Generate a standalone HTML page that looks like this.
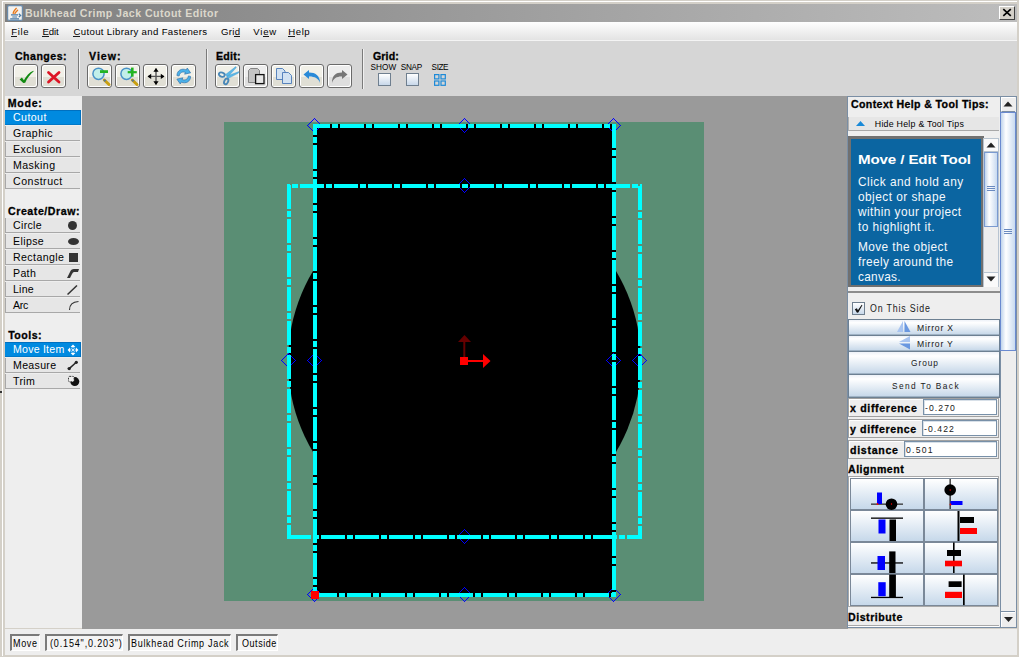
<!DOCTYPE html>
<html><head><meta charset="utf-8"><style>
html,body{margin:0;padding:0;width:1019px;height:657px;overflow:hidden;background:#d4d0c8;}
.b{position:absolute;}
.t{position:absolute;white-space:nowrap;line-height:1;font-family:"Liberation Sans", sans-serif;}
.tbtn{width:25px;height:24px;box-sizing:border-box;border:1px solid #6a6a6a;border-radius:3px;background:linear-gradient(#f1f0e8 0%,#f1f0e8 54%,#e0dfd5 54%,#e0dfd5 100%);box-shadow:inset 1px 1px 0 #fff,inset -1px -1px 0 #fff;}
.tbtn.g{background:linear-gradient(#ededed 0%,#ededed 54%,#dedede 54%,#dedede 100%);}
</style></head><body>
<div class="b" style="left:0px;top:0px;width:1019px;height:657px;background:#d4d0c8;"></div>
<div class="b" style="left:2px;top:1px;width:1015px;height:1px;background:#ffffff;"></div>
<div class="b" style="left:2px;top:1px;width:1px;height:655px;background:#ffffff;"></div>
<div class="b" style="left:5px;top:4px;width:1012px;height:18px;background:linear-gradient(to right,#7f7f7f,#bdbdbd);"></div>
<svg class="b" style="left:7px;top:5px" width="16" height="16" viewBox="0 0 16 16"><rect x="0.6" y="0.6" width="14.8" height="14.8" rx="1.5" fill="#f2f2f0" stroke="#6a8cac" stroke-width="1.2"/><path d="M6.3 9 C5.6 7 7.6 5.2 9.6 3 M7.8 9 C7.8 7.3 10.2 6.3 10.8 4.8" stroke="#e8781a" stroke-width="1.3" fill="none"/><path d="M4 9.9 H11 M5.3 12 H10 M3.2 13.9 H12" stroke="#4a7aa5" stroke-width="1.1"/><path d="M11.8 8.8 L13.6 10.4 L11.8 12.1" stroke="#4a7aa5" stroke-width="1.3" fill="none"/></svg>
<div class="t" style="left:25px;top:7.53px;font-size:10.6px;font-weight:bold;color:#dcd8cc;letter-spacing:0.462px;">Bulkhead Crimp Jack Cutout Editor</div>
<div class="b" style="left:999px;top:6px;width:16px;height:14px;background:#d4d0c8;border-top:1px solid #fff;border-left:1px solid #fff;border-right:1px solid #404040;border-bottom:1px solid #404040;box-sizing:border-box;"></div>
<svg class="b" style="left:1002px;top:8px" width="10" height="9" viewBox="0 0 10 9"><path d="M1.3 1.2 L8.8 7.8 M8.8 1.2 L1.3 7.8" stroke="#000" stroke-width="1.7"/></svg>
<div class="b" style="left:5px;top:22px;width:1012px;height:19px;background:linear-gradient(#fefefe,#e2e2e2);"></div>
<div class="b" style="left:5px;top:40px;width:1012px;height:1px;background:#f4f4f4;"></div>
<div class="t" style="left:11.2px;top:27.17px;font-size:9.6px;color:#000;letter-spacing:0.659px;">File</div>
<div class="b" style="left:11px;top:36px;width:6px;height:1px;background:#1a1a1a;"></div>
<div class="t" style="left:42.4px;top:27.17px;font-size:9.6px;color:#000;letter-spacing:-0.089px;">Edit</div>
<div class="b" style="left:42px;top:36px;width:7px;height:1px;background:#1a1a1a;"></div>
<div class="t" style="left:73.5px;top:27.17px;font-size:9.6px;color:#000;letter-spacing:0.346px;">Cutout Library and Fasteners</div>
<div class="b" style="left:73px;top:36px;width:7px;height:1px;background:#1a1a1a;"></div>
<div class="t" style="left:221px;top:27.17px;font-size:9.6px;color:#000;letter-spacing:0.337px;">Grid</div>
<div class="b" style="left:234px;top:36px;width:6px;height:1px;background:#1a1a1a;"></div>
<div class="t" style="left:253.2px;top:27.17px;font-size:9.6px;color:#000;letter-spacing:0.802px;">View</div>
<div class="b" style="left:263px;top:36px;width:6px;height:1px;background:#1a1a1a;"></div>
<div class="t" style="left:288.3px;top:27.17px;font-size:9.6px;color:#000;letter-spacing:0.535px;">Help</div>
<div class="b" style="left:288px;top:36px;width:7px;height:1px;background:#1a1a1a;"></div>
<div class="b" style="left:5px;top:41px;width:1012px;height:55px;background:#d6d6d6;"></div>
<div class="t" style="left:15px;top:50.73px;font-size:10.6px;font-weight:bold;-webkit-text-stroke:0.3px #000;color:#000;letter-spacing:0.466px;">Changes:</div>
<div class="t" style="left:89px;top:50.73px;font-size:10.6px;font-weight:bold;-webkit-text-stroke:0.3px #000;color:#000;letter-spacing:1.013px;">View:</div>
<div class="t" style="left:216px;top:50.73px;font-size:10.6px;font-weight:bold;-webkit-text-stroke:0.3px #000;color:#000;letter-spacing:0.248px;">Edit:</div>
<div class="t" style="left:373px;top:50.73px;font-size:10.6px;font-weight:bold;-webkit-text-stroke:0.3px #000;color:#000;letter-spacing:0.131px;">Grid:</div>
<div class="b" style="left:78px;top:49px;width:1px;height:40px;background:#7a7a7a;"></div>
<div class="b" style="left:79px;top:49px;width:1px;height:40px;background:#f0f0f0;"></div>
<div class="b" style="left:206px;top:49px;width:1px;height:40px;background:#7a7a7a;"></div>
<div class="b" style="left:207px;top:49px;width:1px;height:40px;background:#f0f0f0;"></div>
<div class="b" style="left:362px;top:49px;width:1px;height:40px;background:#7a7a7a;"></div>
<div class="b" style="left:363px;top:49px;width:1px;height:40px;background:#f0f0f0;"></div>
<div class="b tbtn" style="left:13px;top:64px;"></div>
<div class="b tbtn" style="left:41px;top:64px;"></div>
<div class="b tbtn" style="left:87px;top:64px;"></div>
<div class="b tbtn" style="left:115px;top:64px;"></div>
<div class="b tbtn" style="left:143px;top:64px;"></div>
<div class="b tbtn" style="left:171px;top:64px;"></div>
<div class="b tbtn" style="left:215px;top:64px;"></div>
<div class="b tbtn" style="left:271px;top:64px;"></div>
<div class="b tbtn" style="left:299px;top:64px;"></div>
<div class="b tbtn g" style="left:243px;top:64px;"></div>
<div class="b tbtn g" style="left:327px;top:64px;"></div>
<svg class="b" style="left:13px;top:64px" width="25" height="24" viewBox="0 0 25 24"><path d="M6.6 15.4 L8.9 13.6 L10.9 16.3 C13.2 11.8 16.2 8.4 20.4 6.7 L20.6 7.6 C17 10.4 14.3 14.2 12.2 18.7 L10.3 18.9 Z" fill="#128a12"/></svg>
<svg class="b" style="left:41px;top:64px" width="25" height="24" viewBox="0 0 25 24"><path d="M7.5 8.5 L18 18 M18 8.5 L7.5 18" stroke="#dd1525" stroke-width="2.8" stroke-linecap="round"/></svg>
<svg class="b" style="left:87px;top:64px" width="25" height="24" viewBox="0 0 25 24"><circle cx="11.5" cy="9.8" r="5.6" fill="#c2efe9" stroke="#4a92c8" stroke-width="1.5"/><path d="M17.3 16 L22 20.5" stroke="#c9a010" stroke-width="3" stroke-linecap="round"/><path d="M17 15.7 L18.6 17.2" stroke="#5a7a90" stroke-width="2"/><rect x="13" y="6.2" width="8" height="2.8" fill="#22b422"/></svg>
<svg class="b" style="left:115px;top:64px" width="25" height="24" viewBox="0 0 25 24"><circle cx="11.5" cy="9.8" r="5.6" fill="#c2efe9" stroke="#4a92c8" stroke-width="1.5"/><path d="M17.3 16 L22 20.5" stroke="#c9a010" stroke-width="3" stroke-linecap="round"/><path d="M17 15.7 L18.6 17.2" stroke="#5a7a90" stroke-width="2"/><rect x="12.7" y="7.1" width="9.1" height="2.2" fill="#22b422"/><rect x="16" y="3.6" width="2.6" height="9.1" fill="#22b422"/></svg>
<svg class="b" style="left:143px;top:64px" width="25" height="24" viewBox="0 0 25 24"><path d="M5 12.4 H21 M13 4.5 V20.5" stroke="#555" stroke-width="1.4"/><path d="M4.5 12.4 L8.2 9.8 V15 Z M21.5 12.4 L17.8 9.8 V15 Z M13 4 L10.4 7.8 H15.6 Z M13 21 L10.4 17.2 H15.6 Z" fill="#000"/></svg>
<svg class="b" style="left:171px;top:64px" width="25" height="24" viewBox="0 0 25 24"><g transform="rotate(12 12.8 12)"><path d="M6 13 C5 8 9 4.5 14 5.5 L14.5 3.5 L18.8 7.5 L13.2 10 L13.8 8.2 C10.5 7.5 8 9.5 8.2 13 Z" fill="#4ab2ea" stroke="#3a7ab0" stroke-width="0.7"/><path d="M19.5 11 C20.5 16 16.5 19.5 11.5 18.5 L11 20.5 L6.7 16.5 L12.3 14 L11.7 15.8 C15 16.5 17.5 14.5 17.3 11 Z" fill="#4ab2ea" stroke="#3a7ab0" stroke-width="0.7"/></g></svg>
<svg class="b" style="left:215px;top:64px" width="25" height="24" viewBox="0 0 25 24"><path d="M10.5 10.6 L20.8 2.6 L21.3 3.6 L12.6 13.2 Z" fill="#5ab8e8" stroke="#4a98c8" stroke-width="0.4"/><path d="M11.8 12 L24 7.6 L23.6 9 L13 14.6 Z" fill="#5ab8e8" stroke="#4a98c8" stroke-width="0.4"/><ellipse cx="6.8" cy="10.6" rx="3" ry="2.1" fill="none" stroke="#4a88b8" stroke-width="1.9" transform="rotate(15 6.8 10.6)"/><ellipse cx="11.2" cy="17.4" rx="1.9" ry="3" fill="none" stroke="#4a88b8" stroke-width="1.9" transform="rotate(25 11.2 17.4)"/></svg>
<svg class="b" style="left:243px;top:64px" width="25" height="24" viewBox="0 0 25 24"><path d="M5.5 18.5 V6.5 L7.5 4.5 H14.5 L16.5 6.5 V18.5 Z" fill="#c4c4c4" stroke="#7a7a7a" stroke-width="0.9"/><rect x="12.6" y="10.6" width="8.4" height="9" fill="#e6e6e6" stroke="#111" stroke-width="1.3"/></svg>
<svg class="b" style="left:271px;top:64px" width="25" height="24" viewBox="0 0 25 24"><path d="M5.5 4.5 H11.5 L14 7 V15.5 H5.5 Z" fill="#d2e2f2" stroke="#4a78b8" stroke-width="0.9"/><path d="M11.5 8.5 H17.5 L20.5 11.5 V19.5 H11.5 Z" fill="#d2e2f2" stroke="#4a78b8" stroke-width="0.9"/></svg>
<svg class="b" style="left:299px;top:64px" width="25" height="24" viewBox="0 0 25 24"><path d="M4.5 10.5 L10 6 V8.6 C16 8.5 21 11.5 21 19 C19.5 14.5 15.5 12.5 10 12.6 V15 Z" fill="#2a8ad8"/></svg>
<svg class="b" style="left:327px;top:64px" width="25" height="24" viewBox="0 0 25 24"><path d="M20.5 10.5 L15 6 V8.6 C9 8.5 5 11.5 5 19 C6.5 14.5 9.5 12.5 15 12.6 V15 Z" fill="#777"/></svg>
<div class="t" style="left:370.6px;top:64.06px;font-size:8.2px;color:#000;letter-spacing:0.053px;">SHOW</div>
<div class="t" style="left:400.7px;top:64.06px;font-size:8.2px;color:#000;letter-spacing:-0.245px;">SNAP</div>
<div class="t" style="left:431.6px;top:64.06px;font-size:8.2px;color:#000;letter-spacing:-0.412px;">SIZE</div>
<div class="b" style="left:378px;top:73px;width:13px;height:13px;border:1px solid #6f7f8f;box-sizing:border-box;background:linear-gradient(#ffffff,#c8d8ea);"></div>
<div class="b" style="left:406px;top:73px;width:13px;height:13px;border:1px solid #6f7f8f;box-sizing:border-box;background:linear-gradient(#ffffff,#c8d8ea);"></div>
<svg class="b" style="left:434px;top:74px" width="12" height="12" viewBox="0 0 12 12"><g fill="none" stroke="#1d8ad8" stroke-width="1.2"><rect x="0.6" y="0.6" width="4.3" height="4.3"/><rect x="7" y="0.6" width="4.3" height="4.3"/><rect x="0.6" y="7" width="4.3" height="4.3"/><rect x="7" y="7" width="4.3" height="4.3"/></g></svg>
<div class="b" style="left:5px;top:96px;width:77px;height:532px;background:#eeeeee;"></div>
<div class="t" style="left:7.8px;top:97.73px;font-size:10.6px;font-weight:bold;-webkit-text-stroke:0.3px #000;color:#000;letter-spacing:0.710px;">Mode:</div>
<div class="b" style="left:5px;top:110px;width:76px;height:15px;background:#008ae0;box-shadow:inset 0 1px 0 #0070c0,inset -1px 0 0 #0070c0,inset 0 -1px 0 #0078c8;"></div>
<div class="t" style="left:13px;top:111.83px;font-size:10.6px;color:#ffffff;letter-spacing:0.426px;">Cutout</div>
<div class="b" style="left:5px;top:126px;width:75px;height:15px;background:#e6e6e6;border-left:1px solid #a8a8a8;border-bottom:1px solid #a8a8a8;box-sizing:border-box;"></div>
<div class="t" style="left:13px;top:127.83px;font-size:10.6px;color:#000;letter-spacing:0.401px;">Graphic</div>
<div class="b" style="left:5px;top:142px;width:75px;height:15px;background:#e6e6e6;border-left:1px solid #a8a8a8;border-bottom:1px solid #a8a8a8;box-sizing:border-box;"></div>
<div class="t" style="left:13px;top:143.83px;font-size:10.6px;color:#000;letter-spacing:0.394px;">Exclusion</div>
<div class="b" style="left:5px;top:158px;width:75px;height:15px;background:#e6e6e6;border-left:1px solid #a8a8a8;border-bottom:1px solid #a8a8a8;box-sizing:border-box;"></div>
<div class="t" style="left:13px;top:159.83px;font-size:10.6px;color:#000;letter-spacing:0.441px;">Masking</div>
<div class="b" style="left:5px;top:174px;width:75px;height:15px;background:#e6e6e6;border-left:1px solid #a8a8a8;border-bottom:1px solid #a8a8a8;box-sizing:border-box;"></div>
<div class="t" style="left:13px;top:175.83px;font-size:10.6px;color:#000;letter-spacing:0.489px;">Construct</div>
<div class="t" style="left:8px;top:206.03px;font-size:10.6px;font-weight:bold;-webkit-text-stroke:0.3px #000;color:#000;letter-spacing:0.561px;">Create/Draw:</div>
<div class="b" style="left:5px;top:218px;width:75px;height:15px;background:#e6e6e6;border-left:1px solid #a8a8a8;border-bottom:1px solid #a8a8a8;box-sizing:border-box;"></div>
<div class="t" style="left:13px;top:219.83px;font-size:10.6px;color:#000;letter-spacing:0.324px;">Circle</div>
<div class="b" style="left:68px;top:221px;width:9px;height:9px;border-radius:50%;background:#333;"></div>
<div class="b" style="left:5px;top:234px;width:75px;height:15px;background:#e6e6e6;border-left:1px solid #a8a8a8;border-bottom:1px solid #a8a8a8;box-sizing:border-box;"></div>
<div class="t" style="left:13px;top:235.83px;font-size:10.6px;color:#000;letter-spacing:0.368px;">Elipse</div>
<div class="b" style="left:68px;top:238px;width:11px;height:7px;border-radius:50%;background:#333;"></div>
<div class="b" style="left:5px;top:250px;width:75px;height:15px;background:#e6e6e6;border-left:1px solid #a8a8a8;border-bottom:1px solid #a8a8a8;box-sizing:border-box;"></div>
<div class="t" style="left:13px;top:251.83px;font-size:10.6px;color:#000;letter-spacing:0.411px;">Rectangle</div>
<div class="b" style="left:69px;top:253px;width:9px;height:9px;background:#333;"></div>
<div class="b" style="left:5px;top:266px;width:75px;height:15px;background:#e6e6e6;border-left:1px solid #a8a8a8;border-bottom:1px solid #a8a8a8;box-sizing:border-box;"></div>
<div class="t" style="left:13px;top:267.83px;font-size:10.6px;color:#000;letter-spacing:0.333px;">Path</div>
<svg class="b" style="left:67px;top:269px" width="12" height="10" viewBox="0 0 12 10"><path d="M0 9 L3 3 Q4 0 7 0 L12 0 L11 3 L7 3 Q6 3 5 5 L3 9 Z" fill="#333"/></svg>
<div class="b" style="left:5px;top:282px;width:75px;height:15px;background:#e6e6e6;border-left:1px solid #a8a8a8;border-bottom:1px solid #a8a8a8;box-sizing:border-box;"></div>
<div class="t" style="left:13px;top:283.83px;font-size:10.6px;color:#000;letter-spacing:0.221px;">Line</div>
<svg class="b" style="left:67px;top:285px" width="12" height="10" viewBox="0 0 12 10"><path d="M0.5 9.5 L10 0.5" stroke="#333" stroke-width="1.5"/></svg>
<div class="b" style="left:5px;top:298px;width:75px;height:15px;background:#e6e6e6;border-left:1px solid #a8a8a8;border-bottom:1px solid #a8a8a8;box-sizing:border-box;"></div>
<div class="t" style="left:13px;top:299.83px;font-size:10.6px;color:#000;letter-spacing:-0.297px;">Arc</div>
<svg class="b" style="left:68px;top:300px" width="12" height="11" viewBox="0 0 12 11"><path d="M1.5 10 Q1.5 2 10.5 1.5" stroke="#333" stroke-width="1.1" fill="none"/></svg>
<div class="t" style="left:8.2px;top:329.83px;font-size:10.6px;font-weight:bold;-webkit-text-stroke:0.3px #000;color:#000;letter-spacing:0.488px;">Tools:</div>
<div class="b" style="left:5px;top:342px;width:76px;height:15px;background:#008ae0;box-shadow:inset 0 1px 0 #0070c0,inset -1px 0 0 #0070c0,inset 0 -1px 0 #0078c8;"></div>
<div class="t" style="left:13px;top:343.83px;font-size:10.6px;color:#ffffff;letter-spacing:0.222px;">Move Item</div>
<svg class="b" style="left:67px;top:344px" width="12" height="12" viewBox="0 0 12 12"><g fill="#fff"><path d="M6 0.6 L8.4 3 L3.6 3Z M6 11.4 L8.4 9 L3.6 9Z M0.6 6 L3 3.6 L3 8.4Z M11.4 6 L9 3.6 L9 8.4Z"/><circle cx="6" cy="6" r="1.1"/></g><circle cx="6" cy="6" r="2.4" fill="none" stroke="#bfe0f8" stroke-width="0.8"/></svg>
<div class="b" style="left:5px;top:358px;width:75px;height:15px;background:#e6e6e6;border-left:1px solid #a8a8a8;border-bottom:1px solid #a8a8a8;box-sizing:border-box;"></div>
<div class="t" style="left:13px;top:359.83px;font-size:10.6px;color:#000;letter-spacing:0.313px;">Measure</div>
<svg class="b" style="left:67px;top:360px" width="12" height="11" viewBox="0 0 12 11"><path d="M2.2 8.6 L9.3 2.3" stroke="#222" stroke-width="1.5"/><circle cx="2.2" cy="8.6" r="1.7" fill="#222"/><circle cx="9.3" cy="2.3" r="1.6" fill="#222"/></svg>
<div class="b" style="left:5px;top:374px;width:75px;height:15px;background:#e6e6e6;border-left:1px solid #a8a8a8;border-bottom:1px solid #a8a8a8;box-sizing:border-box;"></div>
<div class="t" style="left:13px;top:375.83px;font-size:10.6px;color:#000;letter-spacing:0.347px;">Trim</div>
<svg class="b" style="left:66px;top:374px" width="14" height="14" viewBox="0 0 14 14"><circle cx="8.8" cy="7.6" r="4.5" fill="#111"/><rect x="2.5" y="2.4" width="5.6" height="5.4" rx="1.2" fill="#eee" stroke="#222" stroke-width="0.9" stroke-dasharray="1.6 1"/></svg>
<div class="b" style="left:82px;top:96px;width:766px;height:533px;background:#9a9a9a;"></div>
<div class="b" style="left:224px;top:122px;width:480px;height:479px;background:#5a8e74;"></div>
<svg class="b" style="left:0px;top:0px" width="1019" height="657" viewBox="0 0 1019 657"><circle cx="464.5" cy="361.5" r="176.5" fill="#000"/>
<rect x="313" y="124" width="303" height="473" fill="#000"/>
<path shape-rendering="crispEdges" fill="#0000ff" d="M307 125h1v1h-1zM308 124h1v1h-1zM308 126h1v1h-1zM309 123h1v1h-1zM309 127h1v1h-1zM310 122h1v1h-1zM310 128h1v1h-1zM311 121h1v1h-1zM311 129h1v1h-1zM312 120h1v1h-1zM312 130h1v1h-1zM313 119h1v1h-1zM313 131h1v1h-1zM314 118h1v1h-1zM314 132h1v1h-1zM315 119h1v1h-1zM315 131h1v1h-1zM316 120h1v1h-1zM316 130h1v1h-1zM317 121h1v1h-1zM317 129h1v1h-1zM318 122h1v1h-1zM318 128h1v1h-1zM319 123h1v1h-1zM319 127h1v1h-1zM320 124h1v1h-1zM320 126h1v1h-1zM321 125h1v1h-1zM457 125h1v1h-1zM458 124h1v1h-1zM458 126h1v1h-1zM459 123h1v1h-1zM459 127h1v1h-1zM460 122h1v1h-1zM460 128h1v1h-1zM461 121h1v1h-1zM461 129h1v1h-1zM462 120h1v1h-1zM462 130h1v1h-1zM463 119h1v1h-1zM463 131h1v1h-1zM464 118h1v1h-1zM464 132h1v1h-1zM465 119h1v1h-1zM465 131h1v1h-1zM466 120h1v1h-1zM466 130h1v1h-1zM467 121h1v1h-1zM467 129h1v1h-1zM468 122h1v1h-1zM468 128h1v1h-1zM469 123h1v1h-1zM469 127h1v1h-1zM470 124h1v1h-1zM470 126h1v1h-1zM471 125h1v1h-1zM606 125h1v1h-1zM607 124h1v1h-1zM607 126h1v1h-1zM608 123h1v1h-1zM608 127h1v1h-1zM609 122h1v1h-1zM609 128h1v1h-1zM610 121h1v1h-1zM610 129h1v1h-1zM611 120h1v1h-1zM611 130h1v1h-1zM612 119h1v1h-1zM612 131h1v1h-1zM613 118h1v1h-1zM613 132h1v1h-1zM614 119h1v1h-1zM614 131h1v1h-1zM615 120h1v1h-1zM615 130h1v1h-1zM616 121h1v1h-1zM616 129h1v1h-1zM617 122h1v1h-1zM617 128h1v1h-1zM618 123h1v1h-1zM618 127h1v1h-1zM619 124h1v1h-1zM619 126h1v1h-1zM620 125h1v1h-1zM307 360h1v1h-1zM308 359h1v1h-1zM308 361h1v1h-1zM309 358h1v1h-1zM309 362h1v1h-1zM310 357h1v1h-1zM310 363h1v1h-1zM311 356h1v1h-1zM311 364h1v1h-1zM312 355h1v1h-1zM312 365h1v1h-1zM313 354h1v1h-1zM313 366h1v1h-1zM314 353h1v1h-1zM314 367h1v1h-1zM315 354h1v1h-1zM315 366h1v1h-1zM316 355h1v1h-1zM316 365h1v1h-1zM317 356h1v1h-1zM317 364h1v1h-1zM318 357h1v1h-1zM318 363h1v1h-1zM319 358h1v1h-1zM319 362h1v1h-1zM320 359h1v1h-1zM320 361h1v1h-1zM321 360h1v1h-1zM606 360h1v1h-1zM607 359h1v1h-1zM607 361h1v1h-1zM608 358h1v1h-1zM608 362h1v1h-1zM609 357h1v1h-1zM609 363h1v1h-1zM610 356h1v1h-1zM610 364h1v1h-1zM611 355h1v1h-1zM611 365h1v1h-1zM612 354h1v1h-1zM612 366h1v1h-1zM613 353h1v1h-1zM613 367h1v1h-1zM614 354h1v1h-1zM614 366h1v1h-1zM615 355h1v1h-1zM615 365h1v1h-1zM616 356h1v1h-1zM616 364h1v1h-1zM617 357h1v1h-1zM617 363h1v1h-1zM618 358h1v1h-1zM618 362h1v1h-1zM619 359h1v1h-1zM619 361h1v1h-1zM620 360h1v1h-1zM307 594h1v1h-1zM308 593h1v1h-1zM308 595h1v1h-1zM309 592h1v1h-1zM309 596h1v1h-1zM310 591h1v1h-1zM310 597h1v1h-1zM311 590h1v1h-1zM311 598h1v1h-1zM312 589h1v1h-1zM312 599h1v1h-1zM313 588h1v1h-1zM313 600h1v1h-1zM314 587h1v1h-1zM314 601h1v1h-1zM315 588h1v1h-1zM315 600h1v1h-1zM316 589h1v1h-1zM316 599h1v1h-1zM317 590h1v1h-1zM317 598h1v1h-1zM318 591h1v1h-1zM318 597h1v1h-1zM319 592h1v1h-1zM319 596h1v1h-1zM320 593h1v1h-1zM320 595h1v1h-1zM321 594h1v1h-1zM457 594h1v1h-1zM458 593h1v1h-1zM458 595h1v1h-1zM459 592h1v1h-1zM459 596h1v1h-1zM460 591h1v1h-1zM460 597h1v1h-1zM461 590h1v1h-1zM461 598h1v1h-1zM462 589h1v1h-1zM462 599h1v1h-1zM463 588h1v1h-1zM463 600h1v1h-1zM464 587h1v1h-1zM464 601h1v1h-1zM465 588h1v1h-1zM465 600h1v1h-1zM466 589h1v1h-1zM466 599h1v1h-1zM467 590h1v1h-1zM467 598h1v1h-1zM468 591h1v1h-1zM468 597h1v1h-1zM469 592h1v1h-1zM469 596h1v1h-1zM470 593h1v1h-1zM470 595h1v1h-1zM471 594h1v1h-1zM606 594h1v1h-1zM607 593h1v1h-1zM607 595h1v1h-1zM608 592h1v1h-1zM608 596h1v1h-1zM609 591h1v1h-1zM609 597h1v1h-1zM610 590h1v1h-1zM610 598h1v1h-1zM611 589h1v1h-1zM611 599h1v1h-1zM612 588h1v1h-1zM612 600h1v1h-1zM613 587h1v1h-1zM613 601h1v1h-1zM614 588h1v1h-1zM614 600h1v1h-1zM615 589h1v1h-1zM615 599h1v1h-1zM616 590h1v1h-1zM616 598h1v1h-1zM617 591h1v1h-1zM617 597h1v1h-1zM618 592h1v1h-1zM618 596h1v1h-1zM619 593h1v1h-1zM619 595h1v1h-1zM620 594h1v1h-1zM281 360h1v1h-1zM282 359h1v1h-1zM282 361h1v1h-1zM283 358h1v1h-1zM283 362h1v1h-1zM284 357h1v1h-1zM284 363h1v1h-1zM285 356h1v1h-1zM285 364h1v1h-1zM286 355h1v1h-1zM286 365h1v1h-1zM287 354h1v1h-1zM287 366h1v1h-1zM288 353h1v1h-1zM288 367h1v1h-1zM289 354h1v1h-1zM289 366h1v1h-1zM290 355h1v1h-1zM290 365h1v1h-1zM291 356h1v1h-1zM291 364h1v1h-1zM292 357h1v1h-1zM292 363h1v1h-1zM293 358h1v1h-1zM293 362h1v1h-1zM294 359h1v1h-1zM294 361h1v1h-1zM295 360h1v1h-1zM632 360h1v1h-1zM633 359h1v1h-1zM633 361h1v1h-1zM634 358h1v1h-1zM634 362h1v1h-1zM635 357h1v1h-1zM635 363h1v1h-1zM636 356h1v1h-1zM636 364h1v1h-1zM637 355h1v1h-1zM637 365h1v1h-1zM638 354h1v1h-1zM638 366h1v1h-1zM639 353h1v1h-1zM639 367h1v1h-1zM640 354h1v1h-1zM640 366h1v1h-1zM641 355h1v1h-1zM641 365h1v1h-1zM642 356h1v1h-1zM642 364h1v1h-1zM643 357h1v1h-1zM643 363h1v1h-1zM644 358h1v1h-1zM644 362h1v1h-1zM645 359h1v1h-1zM645 361h1v1h-1zM646 360h1v1h-1zM457 185h1v1h-1zM458 184h1v1h-1zM458 186h1v1h-1zM459 183h1v1h-1zM459 187h1v1h-1zM460 182h1v1h-1zM460 188h1v1h-1zM461 181h1v1h-1zM461 189h1v1h-1zM462 180h1v1h-1zM462 190h1v1h-1zM463 179h1v1h-1zM463 191h1v1h-1zM464 178h1v1h-1zM464 192h1v1h-1zM465 179h1v1h-1zM465 191h1v1h-1zM466 180h1v1h-1zM466 190h1v1h-1zM467 181h1v1h-1zM467 189h1v1h-1zM468 182h1v1h-1zM468 188h1v1h-1zM469 183h1v1h-1zM469 187h1v1h-1zM470 184h1v1h-1zM470 186h1v1h-1zM471 185h1v1h-1zM457 536h1v1h-1zM458 535h1v1h-1zM458 537h1v1h-1zM459 534h1v1h-1zM459 538h1v1h-1zM460 533h1v1h-1zM460 539h1v1h-1zM461 532h1v1h-1zM461 540h1v1h-1zM462 531h1v1h-1zM462 541h1v1h-1zM463 530h1v1h-1zM463 542h1v1h-1zM464 529h1v1h-1zM464 543h1v1h-1zM465 530h1v1h-1zM465 542h1v1h-1zM466 531h1v1h-1zM466 541h1v1h-1zM467 532h1v1h-1zM467 540h1v1h-1zM468 533h1v1h-1zM468 539h1v1h-1zM469 534h1v1h-1zM469 538h1v1h-1zM470 535h1v1h-1zM470 537h1v1h-1zM471 536h1v1h-1z"/>
<path d="M313 126 L616 126" stroke="#00ffff" stroke-width="4" stroke-dasharray="24 2 6 2" stroke-dashoffset="7"/>
<path d="M614 124 L614 597" stroke="#00ffff" stroke-width="4" stroke-dasharray="24 2 6 2" stroke-dashoffset="0"/>
<path d="M616 595 L313 595" stroke="#00ffff" stroke-width="4" stroke-dasharray="24 2 6 2" stroke-dashoffset="27"/>
<path d="M315 597 L315 124" stroke="#00ffff" stroke-width="4" stroke-dasharray="24 2 6 2" stroke-dashoffset="14"/>
<path d="M287 186 L642 186" stroke="#00ffff" stroke-width="4" stroke-dasharray="24 2 6 2" stroke-dashoffset="21"/>
<path d="M640 184 L640 539" stroke="#00ffff" stroke-width="4" stroke-dasharray="24 2 6 2" stroke-dashoffset="32"/>
<path d="M642 537 L287 537" stroke="#00ffff" stroke-width="4" stroke-dasharray="24 2 6 2" stroke-dashoffset="9"/>
<path d="M289 184 L289 539" stroke="#00ffff" stroke-width="4" stroke-dasharray="24 2 6 2" stroke-dashoffset="33"/>
<rect x="311" y="591" width="8" height="8" fill="#ff0000"/>
<rect x="463.3" y="341" width="2" height="17" fill="#660000"/>
<path d="M458 342 L464.5 335 L471 342 Z" fill="#660000"/>
<rect x="460" y="357" width="8" height="8" fill="#ff0000"/>
<rect x="467" y="360" width="17" height="2" fill="#ff0000"/>
<path d="M483 354 L490.5 361 L483 368 Z" fill="#ff0000"/></svg>
<div class="b" style="left:847px;top:96px;width:154px;height:532px;background:#eeeeee;"></div>
<div class="t" style="left:851px;top:98.63px;font-size:10.6px;font-weight:bold;-webkit-text-stroke:0.3px #000;color:#000;letter-spacing:0.376px;">Context Help &amp; Tool Tips:</div>
<div class="b" style="left:848px;top:117px;width:151px;height:14px;background:#e6e6e6;border-left:1px solid #b0b0b0;border-bottom:1px solid #a8a8a8;box-sizing:border-box;"></div>
<svg class="b" style="left:856px;top:121px" width="9" height="5" viewBox="0 0 9 5"><path d="M0 5 L4.5 0 L9 5 Z" fill="#1a8ad8"/></svg>
<div class="t" style="left:874.8px;top:119.95px;font-size:8.8px;color:#000;letter-spacing:0.252px;">Hide Help &amp; Tool Tips</div>
<div class="b" style="left:848px;top:136px;width:136px;height:151px;background:#707070;"></div>
<div class="b" style="left:851px;top:139px;width:130px;height:146px;background:#0b65a1;"></div>
<div class="t" style="left:857.9px;top:153.47px;font-size:13.5px;font-weight:bold;color:#ffffff;letter-spacing:-0.110px;transform:scaleX(1.12);transform-origin:0 0;">Move / Edit Tool</div>
<div class="t" style="left:857.7px;top:174.83px;font-size:13.2px;color:#f4f8fc;letter-spacing:0.539px;transform:scaleX(0.9);transform-origin:0 0;">Click and hold any</div>
<div class="t" style="left:857.7px;top:189.83px;font-size:13.2px;color:#f4f8fc;letter-spacing:0.511px;transform:scaleX(0.9);transform-origin:0 0;">object or shape</div>
<div class="t" style="left:857.7px;top:204.83px;font-size:13.2px;color:#f4f8fc;letter-spacing:0.460px;transform:scaleX(0.9);transform-origin:0 0;">within your project</div>
<div class="t" style="left:857.7px;top:219.83px;font-size:13.2px;color:#f4f8fc;letter-spacing:0.493px;transform:scaleX(0.9);transform-origin:0 0;">to highlight it.</div>
<div class="t" style="left:857.7px;top:240.13px;font-size:13.2px;color:#f4f8fc;letter-spacing:0.429px;transform:scaleX(0.9);transform-origin:0 0;">Move the object</div>
<div class="t" style="left:857.7px;top:255.13px;font-size:13.2px;color:#f4f8fc;letter-spacing:0.412px;transform:scaleX(0.9);transform-origin:0 0;">freely around the</div>
<div class="t" style="left:857.7px;top:270.13px;font-size:13.2px;color:#f4f8fc;letter-spacing:0.314px;transform:scaleX(0.9);transform-origin:0 0;">canvas.</div>
<div class="b" style="left:983px;top:138px;width:16px;height:149px;background:#eeeeee;border:1px solid #b8c4d0;box-sizing:border-box;"></div>
<div class="b" style="left:984px;top:139px;width:14px;height:12px;background:#fafafa;border-bottom:1px solid #b8c4d0;"></div>
<svg class="b" style="left:986px;top:142px" width="10" height="6" viewBox="0 0 10 6"><path d="M0.5 5.5 L5 0.5 L9.5 5.5 Z" fill="#222"/></svg>
<div class="b" style="left:984px;top:152px;width:14px;height:75px;background:linear-gradient(to right,#c0d4ec,#ffffff 35%,#c8daf0);border:1px solid #7a9ad0;box-sizing:border-box;"></div>
<svg class="b" style="left:986px;top:186px" width="10" height="6" viewBox="0 0 10 6"><path d="M1 0.5 H9 M1 2.5 H9 M1 4.5 H9" stroke="#6a8ac0" stroke-width="1"/></svg>
<div class="b" style="left:984px;top:272px;width:14px;height:14px;background:#fafafa;border-top:1px solid #b8c4d0;"></div>
<svg class="b" style="left:986px;top:276px" width="10" height="6" viewBox="0 0 10 6"><path d="M0.5 0.5 L5 5.5 L9.5 0.5 Z" fill="#222"/></svg>
<div class="b" style="left:848px;top:291px;width:152px;height:2px;background:#8c8c8c;"></div>
<div class="b" style="left:852px;top:302px;width:13px;height:13px;border:1px solid #6f7f8f;box-sizing:border-box;background:linear-gradient(#ffffff,#c8d8ea);"></div>
<svg class="b" style="left:854px;top:304px" width="9" height="9" viewBox="0 0 9 9"><path d="M0.8 5.2 L2.9 4.2 L3.9 6.2 L7.7 0.8 L8.4 1.3 L4.3 8.5 L3 8.7 Z" fill="#111"/></svg>
<div class="t" style="left:869.8px;top:303.54px;font-size:10px;color:#202020;letter-spacing:0.945px;transform:scaleX(0.88);transform-origin:0 0;">On This Side</div>
<div class="b" style="left:848px;top:319px;width:152px;height:17px;border:1px solid #6d8092;box-sizing:border-box;background:linear-gradient(#eef2f8 0%,#ffffff 18%,#c4d6e8 100%);box-shadow:inset 0 -1px 0 #9fb2c4;"></div>
<div class="b" style="left:848px;top:335px;width:152px;height:17px;border:1px solid #6d8092;box-sizing:border-box;background:linear-gradient(#eef2f8 0%,#ffffff 18%,#c4d6e8 100%);box-shadow:inset 0 -1px 0 #9fb2c4;"></div>
<div class="b" style="left:848px;top:351px;width:152px;height:24px;border:1px solid #6d8092;box-sizing:border-box;background:linear-gradient(#eef2f8 0%,#ffffff 18%,#c4d6e8 100%);box-shadow:inset 0 -1px 0 #9fb2c4;"></div>
<div class="b" style="left:848px;top:374px;width:152px;height:24px;border:1px solid #6d8092;box-sizing:border-box;background:linear-gradient(#eef2f8 0%,#ffffff 18%,#c4d6e8 100%);box-shadow:inset 0 -1px 0 #9fb2c4;"></div>
<svg class="b" style="left:897px;top:321px" width="14" height="11" viewBox="0 0 14 11"><path d="M6 0 L6 11 L0 11 Z" fill="#a8c4f0"/><path d="M7.5 0 L7.5 11 L13.5 11 Z" fill="#6a98e0"/></svg>
<div class="t" style="left:916.7px;top:322.90px;font-size:9.8px;color:#202020;letter-spacing:0.851px;transform:scaleX(0.88);transform-origin:0 0;">Mirror X</div>
<svg class="b" style="left:899px;top:336px" width="12" height="14" viewBox="0 0 12 14"><path d="M11 0 L11 6 L0 6 Z" fill="#a8c4f0"/><path d="M11 7.5 L11 13.5 L0 7.5 Z" fill="#6a98e0"/></svg>
<div class="t" style="left:916.7px;top:338.90px;font-size:9.8px;color:#202020;letter-spacing:0.851px;transform:scaleX(0.88);transform-origin:0 0;">Mirror Y</div>
<div class="t" style="left:911px;top:357.70px;font-size:9.8px;color:#202020;letter-spacing:1.114px;transform:scaleX(0.85);transform-origin:0 0;">Group</div>
<div class="t" style="left:891.7px;top:380.70px;font-size:9.8px;color:#202020;letter-spacing:1.640px;transform:scaleX(0.85);transform-origin:0 0;">Send To Back</div>
<div class="b" style="left:848px;top:398px;width:151px;height:19px;border:1px solid #a0a0a0;box-shadow:inset 1px 1px 0 #fff;box-sizing:border-box;"></div>
<div class="t" style="left:850px;top:402.73px;font-size:10.6px;font-weight:bold;-webkit-text-stroke:0.3px #000;color:#000;letter-spacing:0.666px;">x difference</div>
<div class="b" style="left:923px;top:399px;width:74px;height:16px;background:#fff;border:1px solid #7890a8;box-shadow:inset 1px 1px 0 #d8e0e8;box-sizing:border-box;"></div>
<div class="t" style="left:924.6px;top:402.77px;font-size:9.6px;color:#202020;letter-spacing:1.204px;transform:scaleX(0.9);transform-origin:0 0;">-0.270</div>
<div class="b" style="left:848px;top:419px;width:151px;height:19px;border:1px solid #a0a0a0;box-shadow:inset 1px 1px 0 #fff;box-sizing:border-box;"></div>
<div class="t" style="left:850px;top:423.73px;font-size:10.6px;font-weight:bold;-webkit-text-stroke:0.3px #000;color:#000;letter-spacing:0.611px;">y difference</div>
<div class="b" style="left:922px;top:420px;width:75px;height:16px;background:#fff;border:1px solid #7890a8;box-shadow:inset 1px 1px 0 #d8e0e8;box-sizing:border-box;"></div>
<div class="t" style="left:923.6px;top:423.77px;font-size:9.6px;color:#202020;letter-spacing:1.204px;transform:scaleX(0.9);transform-origin:0 0;">-0.422</div>
<div class="b" style="left:848px;top:440px;width:151px;height:19px;border:1px solid #a0a0a0;box-shadow:inset 1px 1px 0 #fff;box-sizing:border-box;"></div>
<div class="t" style="left:850px;top:444.73px;font-size:10.6px;font-weight:bold;-webkit-text-stroke:0.3px #000;color:#000;letter-spacing:0.702px;">distance</div>
<div class="b" style="left:904px;top:441px;width:93px;height:16px;background:#fff;border:1px solid #7890a8;box-shadow:inset 1px 1px 0 #d8e0e8;box-sizing:border-box;"></div>
<div class="t" style="left:905.6px;top:444.77px;font-size:9.6px;color:#202020;letter-spacing:1.360px;transform:scaleX(0.9);transform-origin:0 0;">0.501</div>
<div class="t" style="left:848px;top:463.63px;font-size:10.6px;font-weight:bold;-webkit-text-stroke:0.3px #000;color:#000;letter-spacing:0.492px;">Alignment</div>
<div class="b" style="left:848px;top:476px;width:151px;height:131px;border:1px solid #a8a8a8;box-shadow:inset 1px 1px 0 #fff;box-sizing:border-box;"></div>
<div class="b" style="left:850px;top:478px;width:74px;height:32px;border:1px solid #7a8898;box-sizing:border-box;background:linear-gradient(#ffffff,#c6d8ea);"></div>
<div class="b" style="left:924px;top:478px;width:74px;height:32px;border:1px solid #7a8898;box-sizing:border-box;background:linear-gradient(#ffffff,#c6d8ea);"></div>
<div class="b" style="left:850px;top:510px;width:74px;height:32px;border:1px solid #7a8898;box-sizing:border-box;background:linear-gradient(#ffffff,#c6d8ea);"></div>
<div class="b" style="left:924px;top:510px;width:74px;height:32px;border:1px solid #7a8898;box-sizing:border-box;background:linear-gradient(#ffffff,#c6d8ea);"></div>
<div class="b" style="left:850px;top:542px;width:74px;height:32px;border:1px solid #7a8898;box-sizing:border-box;background:linear-gradient(#ffffff,#c6d8ea);"></div>
<div class="b" style="left:924px;top:542px;width:74px;height:32px;border:1px solid #7a8898;box-sizing:border-box;background:linear-gradient(#ffffff,#c6d8ea);"></div>
<div class="b" style="left:850px;top:574px;width:74px;height:32px;border:1px solid #7a8898;box-sizing:border-box;background:linear-gradient(#ffffff,#c6d8ea);"></div>
<div class="b" style="left:924px;top:574px;width:74px;height:32px;border:1px solid #7a8898;box-sizing:border-box;background:linear-gradient(#ffffff,#c6d8ea);"></div>
<svg class="b" style="left:0px;top:0px" width="1019" height="657" viewBox="0 0 1019 657"><rect x="871" y="503.5" width="32" height="1.3" fill="#333"/><rect x="877" y="492.5" width="5" height="11.5" fill="#0000ff"/><circle cx="891.5" cy="504.2" r="5.8" fill="#000"/><circle cx="877.5" cy="504" r="0.9" fill="#f00"/><circle cx="891.5" cy="504" r="0.7" fill="#f00"/>
<rect x="949.5" y="479" width="1.3" height="30" fill="#222"/><circle cx="950.2" cy="490" r="5.8" fill="#000"/><circle cx="950.2" cy="490" r="0.7" fill="#f00"/><rect x="950.5" y="501" width="12" height="4" fill="#0000ff"/><circle cx="950.5" cy="504.5" r="0.9" fill="#f00"/>
<rect x="871" y="517.5" width="32" height="1.3" fill="#000"/><rect x="878.5" y="519.5" width="7" height="14" fill="#0000ff"/><rect x="889.5" y="519.5" width="6.5" height="21.5" fill="#000"/>
<rect x="957.5" y="511" width="2" height="30" fill="#000"/><rect x="960" y="517" width="14" height="6" fill="#000"/><rect x="960" y="528" width="17" height="6" fill="#f00"/>
<rect x="871" y="562.3" width="32" height="1.3" fill="#000"/><rect x="877.5" y="556" width="7.5" height="14" fill="#0000ff"/><rect x="889.2" y="551.4" width="6.3" height="21.6" fill="#000"/>
<rect x="953" y="542.5" width="1.6" height="30.5" fill="#000"/><rect x="947" y="550" width="14" height="6" fill="#000"/><rect x="945" y="560.7" width="17" height="5.6" fill="#f00"/>
<rect x="871" y="596.8" width="32" height="1.3" fill="#000"/><rect x="878.3" y="582.2" width="7.4" height="14" fill="#0000ff"/><rect x="889.2" y="574.6" width="6.7" height="22.4" fill="#000"/>
<rect x="963" y="574.6" width="1.7" height="30.5" fill="#000"/><rect x="948.6" y="581.3" width="13" height="5.7" fill="#000"/><rect x="945" y="591.8" width="17" height="6.2" fill="#f00"/></svg>
<div class="t" style="left:848px;top:611.83px;font-size:10.6px;font-weight:bold;-webkit-text-stroke:0.3px #000;color:#000;letter-spacing:0.539px;">Distribute</div>
<div class="b" style="left:848px;top:625px;width:151px;height:2px;border-top:1px solid #a8a8a8;border-bottom:1px solid #fff;box-sizing:border-box;"></div>
<div class="b" style="left:1000px;top:97px;width:16px;height:530px;background:#eeeeee;border-left:1px solid #7a8ea4;box-sizing:border-box;"></div>
<div class="b" style="left:1001px;top:97px;width:14px;height:15px;background:#eeeeee;border-top:1px solid #fff;border-left:1px solid #fff;border-bottom:1px solid #7a8ea4;box-sizing:border-box;"></div>
<svg class="b" style="left:1003px;top:101px" width="10" height="6" viewBox="0 0 10 6"><path d="M0.5 5.5 L5 0.5 L9.5 5.5 Z" fill="#222"/></svg>
<div class="b" style="left:1000px;top:112px;width:16px;height:239px;background:linear-gradient(to right,#c0d4ec,#ffffff 35%,#c8daf0);border:1px solid #6a8ad0;box-sizing:border-box;"></div>
<svg class="b" style="left:1003px;top:229px" width="10" height="6" viewBox="0 0 10 6"><path d="M1 0.5 H9 M1 2.5 H9 M1 4.5 H9" stroke="#6a8ac0" stroke-width="1"/></svg>
<div class="b" style="left:1001px;top:611px;width:14px;height:16px;background:#eeeeee;border-top:1px solid #7a8ea4;box-shadow:inset 1px 1px 0 #fff;box-sizing:border-box;"></div>
<svg class="b" style="left:1004px;top:617px" width="9" height="5" viewBox="0 0 9 5"><path d="M0 0 L4.5 5 L9 0 Z" fill="#222"/></svg>
<div class="b" style="left:847px;top:96px;width:170px;height:532px;border:1px solid #7a8ea4;box-sizing:border-box;"></div>
<div class="b" style="left:5px;top:629px;width:1012px;height:26px;background:#eeeeee;"></div>
<div class="b" style="left:0px;top:391px;width:2px;height:2px;background:#333;"></div>
<div class="b" style="left:10px;top:634px;width:30px;height:17px;border-top:2px solid #7a7a7a;border-left:2px solid #7a7a7a;border-bottom:1px solid #fff;border-right:1px solid #fff;box-sizing:border-box;background:#f4f4f4;"></div>
<div class="t" style="left:12.6px;top:638.53px;font-size:10px;color:#000;letter-spacing:0.740px;transform:scaleX(0.9);transform-origin:0 0;">Move</div>
<div class="b" style="left:45px;top:634px;width:78px;height:17px;border-top:2px solid #7a7a7a;border-left:2px solid #7a7a7a;border-bottom:1px solid #fff;border-right:1px solid #fff;box-sizing:border-box;background:#f4f4f4;"></div>
<div class="t" style="left:49.5px;top:638.53px;font-size:10px;color:#000;letter-spacing:0.942px;transform:scaleX(0.9);transform-origin:0 0;">(0.154",0.203")</div>
<div class="b" style="left:128px;top:634px;width:103px;height:17px;border-top:2px solid #7a7a7a;border-left:2px solid #7a7a7a;border-bottom:1px solid #fff;border-right:1px solid #fff;box-sizing:border-box;background:#f4f4f4;"></div>
<div class="t" style="left:130.8px;top:638.53px;font-size:10px;color:#000;letter-spacing:0.776px;transform:scaleX(0.9);transform-origin:0 0;">Bulkhead Crimp Jack</div>
<div class="b" style="left:236px;top:634px;width:42px;height:17px;border-top:2px solid #7a7a7a;border-left:2px solid #7a7a7a;border-bottom:1px solid #fff;border-right:1px solid #fff;box-sizing:border-box;background:#f4f4f4;"></div>
<div class="t" style="left:241.8px;top:638.53px;font-size:10px;color:#000;letter-spacing:0.609px;transform:scaleX(0.9);transform-origin:0 0;">Outside</div>
</body></html>
